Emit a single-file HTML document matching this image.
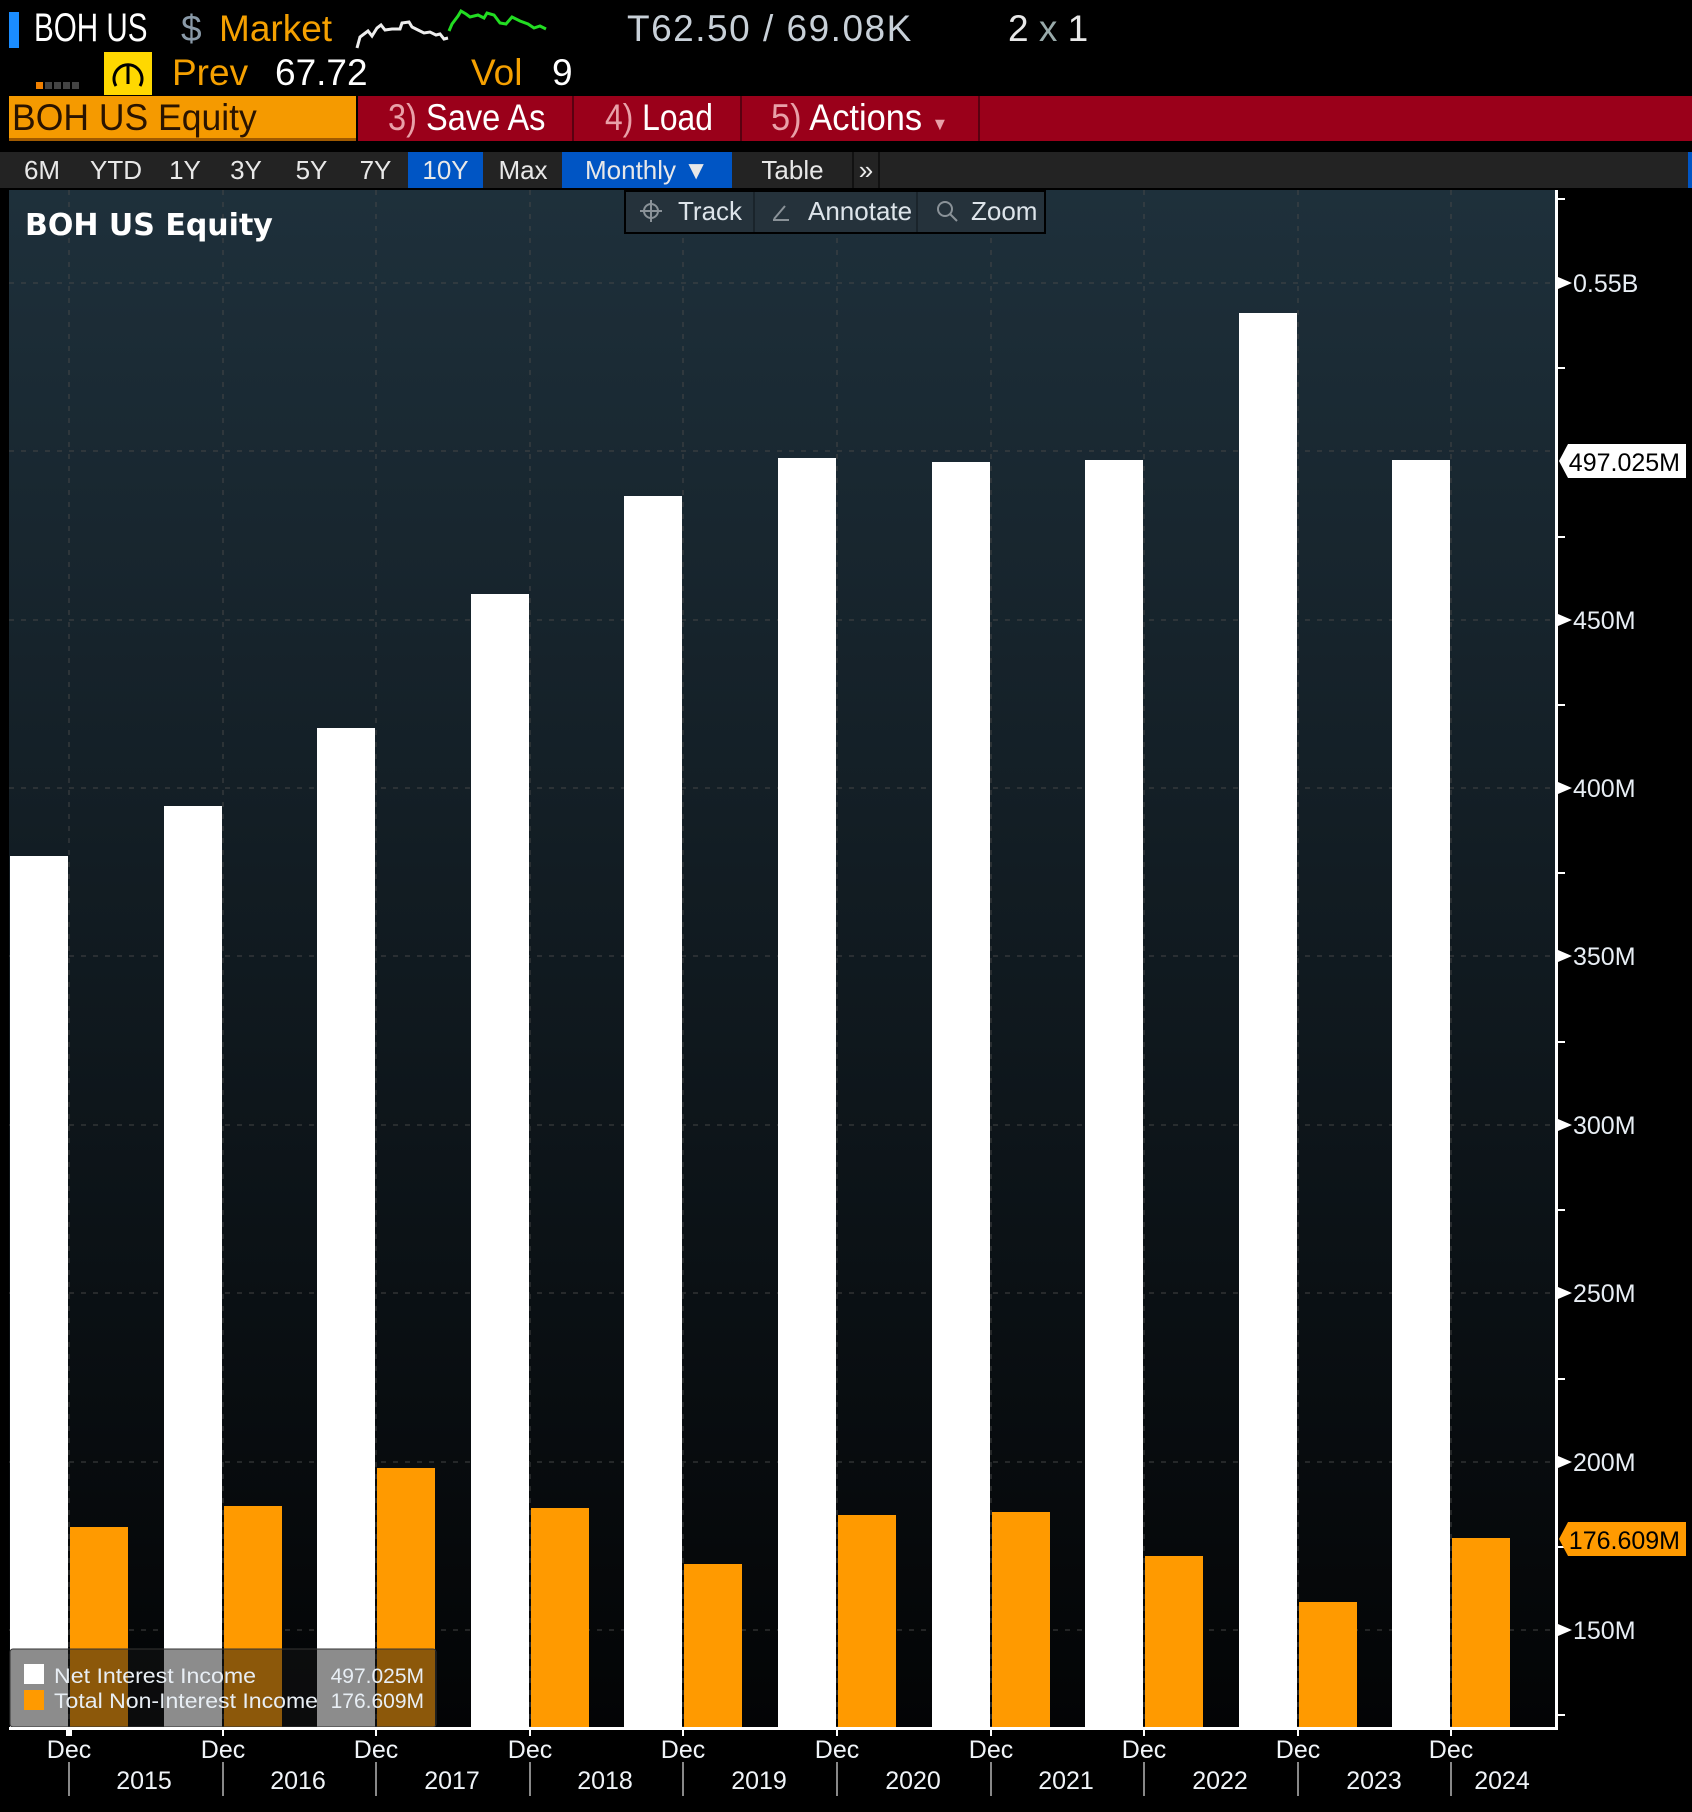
<!DOCTYPE html>
<html><head><meta charset="utf-8"><style>
*{margin:0;padding:0;box-sizing:border-box}
body{width:1692px;height:1812px;background:#000;position:relative;overflow:hidden;font-family:"Liberation Sans Narrow","Liberation Sans",sans-serif;color:#fff}
.a{position:absolute;white-space:nowrap}
.s{transform-origin:left center}
.tab{position:absolute;top:152px;height:36px;background:#232323;color:#e8e8e8;font-size:26px;line-height:36px;text-align:center}
.blue{background:#0055c4}
</style></head><body>
<div class="a" style="left:9px;top:12px;width:10px;height:36px;background:#1a8cff"></div>
<div class="a s" style="left:34px;top:6px;font-size:40px;color:#fff;transform:scaleX(.74)">BOH US</div>
<div class="a" style="left:181px;top:8px;font-size:37px;color:#8a9aa8">$</div>
<div class="a" style="left:219px;top:8px;font-size:37px;color:#f5a000">Market</div>
<svg class="a" style="left:0;top:0" width="600" height="60">
<polyline fill="none" stroke="#eee" stroke-width="3" points="357,48 360,37 364,34 368,31 372,36 377,28 381,25 385,30 392,29 400,29 402,23 409,22 412,27 418,30 424,33 430,32 436,35 440,34 444,39 448,38"/>
<polyline fill="none" stroke="#22dd22" stroke-width="3" points="449,31 452,24 458,16 461,11 466,14 470,17 478,15 484,18 487,13 494,15 500,23 506,24 512,17 520,21 528,24 534,28 540,26 546,29"/>
</svg>
<div class="a" style="left:627px;top:8px;font-size:37px;color:#c8d0d8;letter-spacing:1.5px">T62.50 / 69.08K</div>
<div class="a" style="left:1008px;top:8px;font-size:37px;color:#e8e8e8">2 <span style="color:#9aa">x</span> 1</div>
<div class="a" style="left:36px;top:82px;width:7px;height:7px;background:#f08000"></div>
<div class="a" style="left:45px;top:82px;width:7px;height:7px;background:#444"></div>
<div class="a" style="left:54px;top:82px;width:7px;height:7px;background:#444"></div>
<div class="a" style="left:63px;top:82px;width:7px;height:7px;background:#444"></div>
<div class="a" style="left:72px;top:82px;width:7px;height:7px;background:#444"></div>
<div class="a" style="left:104px;top:52px;width:48px;height:43px;background:#ffd800"></div>
<svg class="a" style="left:104px;top:52px" width="48" height="43"><path d="M12 34 A14 14 0 1 1 36 34" fill="none" stroke="#000" stroke-width="3"/><path d="M24 14 L24 32" stroke="#000" stroke-width="3"/></svg>
<div class="a" style="left:172px;top:52px;font-size:37px;color:#f5a000">Prev</div>
<div class="a" style="left:275px;top:52px;font-size:37px;color:#fff">67.72</div>
<div class="a" style="left:471px;top:52px;font-size:37px;color:#f5a000">Vol</div>
<div class="a" style="left:552px;top:52px;font-size:37px;color:#fff">9</div>
<div class="a" style="left:9px;top:96px;width:347px;height:45px;background:#f59a00;border-bottom:3px solid #a05a00"></div>
<div class="a s" style="left:12px;top:96px;font-size:37px;line-height:44px;color:#2a1400;transform:scaleX(.96)">BOH US Equity</div>
<div class="a" style="left:358px;top:96px;width:1334px;height:45px;background:#9a001a"></div>
<div class="a" style="left:572px;top:96px;width:2px;height:45px;background:#5a0010"></div>
<div class="a" style="left:740px;top:96px;width:2px;height:45px;background:#5a0010"></div>
<div class="a" style="left:978px;top:96px;width:2px;height:45px;background:#5a0010"></div>
<div class="a s" style="left:388px;top:96px;font-size:37px;line-height:44px;transform:scaleX(.88)"><span style="color:#e8a0a8">3)</span> Save As</div>
<div class="a s" style="left:605px;top:96px;font-size:37px;line-height:44px;transform:scaleX(.86)"><span style="color:#e8a0a8">4)</span> Load</div>
<div class="a s" style="left:771px;top:96px;font-size:37px;line-height:44px;transform:scaleX(.93)"><span style="color:#e8a0a8">5)</span> Actions <span style="font-size:18px;color:#e8a0a8">▼</span></div>
<div class="a" style="left:0;top:152px;width:1692px;height:36px;background:#232323"></div>
<div class="tab" style="left:9px;width:66px">6M</div>
<div class="tab" style="left:77px;width:78px">YTD</div>
<div class="tab" style="left:158px;width:54px">1Y</div>
<div class="tab" style="left:214px;width:64px">3Y</div>
<div class="tab" style="left:280px;width:63px">5Y</div>
<div class="tab" style="left:345px;width:61px">7Y</div>
<div class="tab blue" style="left:408px;width:75px">10Y</div>
<div class="tab" style="left:486px;width:74px">Max</div>
<div class="tab blue" style="left:562px;width:170px">Monthly ▼</div>
<div class="tab" style="left:735px;width:115px">Table</div>
<div class="tab" style="left:852px;width:28px;border-left:2px solid #111;border-right:2px solid #111">»</div>
<div class="a" style="left:1688px;top:152px;width:4px;height:36px;background:#0055c4"></div>
<svg class="a" style="left:0;top:0" width="1692" height="1812" font-family="Liberation Sans Narrow, Liberation Sans, sans-serif">
<defs><linearGradient id="g" x1="0" y1="0" x2="0" y2="1"><stop offset="0" stop-color="#1e303b"/><stop offset="1" stop-color="#030405"/></linearGradient></defs>
<rect x="9" y="190" width="1546" height="1538" fill="url(#g)"/>
<g stroke="#4a4a4a" stroke-width="2" stroke-dasharray="5,7" opacity="0.45">
<line x1="9" x2="1555" y1="283" y2="283"/><line x1="9" x2="1555" y1="451" y2="451"/><line x1="9" x2="1555" y1="620" y2="620"/><line x1="9" x2="1555" y1="788" y2="788"/><line x1="9" x2="1555" y1="956" y2="956"/><line x1="9" x2="1555" y1="1125" y2="1125"/><line x1="9" x2="1555" y1="1293" y2="1293"/><line x1="9" x2="1555" y1="1462" y2="1462"/><line x1="9" x2="1555" y1="1630" y2="1630"/>
<line x1="69" x2="69" y1="190" y2="1728"/><line x1="223" x2="223" y1="190" y2="1728"/><line x1="376" x2="376" y1="190" y2="1728"/><line x1="530" x2="530" y1="190" y2="1728"/><line x1="683" x2="683" y1="190" y2="1728"/><line x1="837" x2="837" y1="190" y2="1728"/><line x1="991" x2="991" y1="190" y2="1728"/><line x1="1144" x2="1144" y1="190" y2="1728"/><line x1="1298" x2="1298" y1="190" y2="1728"/><line x1="1451" x2="1451" y1="190" y2="1728"/>
</g>
<g fill="#fff">
<rect x="10" y="856" width="58" height="872"/><rect x="164" y="806" width="58" height="922"/><rect x="317" y="728" width="58" height="1000"/><rect x="471" y="594" width="58" height="1134"/><rect x="624" y="496" width="58" height="1232"/><rect x="778" y="458" width="58" height="1270"/><rect x="932" y="462" width="58" height="1266"/><rect x="1085" y="460" width="58" height="1268"/><rect x="1239" y="313" width="58" height="1415"/><rect x="1392" y="460" width="58" height="1268"/>
</g>
<g fill="#ff9a00">
<rect x="70" y="1527" width="58" height="201"/><rect x="224" y="1506" width="58" height="222"/><rect x="377" y="1468" width="58" height="260"/><rect x="531" y="1508" width="58" height="220"/><rect x="684" y="1564" width="58" height="164"/><rect x="838" y="1515" width="58" height="213"/><rect x="992" y="1512" width="58" height="216"/><rect x="1145" y="1556" width="58" height="172"/><rect x="1299" y="1602" width="58" height="126"/><rect x="1452" y="1538" width="58" height="190"/>
</g>
<rect x="10" y="1649" width="426" height="78" rx="3" fill="rgba(20,20,20,0.49)" stroke="#333" stroke-width="1"/>
<rect x="24" y="1664" width="20" height="20" fill="#fff"/><rect x="24" y="1690" width="20" height="20" fill="#ff9a00"/>
<g font-size="21" fill="#e8eef4"><text x="54" y="1683" textLength="202" lengthAdjust="spacingAndGlyphs">Net Interest Income</text><text x="54" y="1708" textLength="264" lengthAdjust="spacingAndGlyphs">Total Non-Interest Income</text>
<text x="424" y="1683" text-anchor="end">497.025M</text><text x="424" y="1708" text-anchor="end">176.609M</text></g>
<rect x="1555" y="190" width="3" height="1540" fill="#fff"/>
<rect x="9" y="1727" width="1549" height="3" fill="#fff"/>
<g fill="#fff"><rect x="1558" y="198" width="7" height="2"/><rect x="1558" y="367" width="7" height="2"/><rect x="1558" y="536" width="7" height="2"/><rect x="1558" y="704" width="7" height="2"/><rect x="1558" y="872" width="7" height="2"/><rect x="1558" y="1041" width="7" height="2"/><rect x="1558" y="1209" width="7" height="2"/><rect x="1558" y="1378" width="7" height="2"/><rect x="1558" y="1546" width="7" height="2"/><rect x="1558" y="1714" width="7" height="2"/>
<path d="M1558 277 L1572 283 L1558 289Z"/><path d="M1558 614 L1572 620 L1558 626Z"/><path d="M1558 782 L1572 788 L1558 794Z"/><path d="M1558 950 L1572 956 L1558 962Z"/><path d="M1558 1119 L1572 1125 L1558 1131Z"/><path d="M1558 1287 L1572 1293 L1558 1299Z"/><path d="M1558 1456 L1572 1462 L1558 1468Z"/><path d="M1558 1624 L1572 1630 L1558 1636Z"/>
</g>
<g font-size="25" fill="#e8eef4"><text x="1573" y="292">0.55B</text><text x="1573" y="629">450M</text><text x="1573" y="797">400M</text><text x="1573" y="965">350M</text><text x="1573" y="1134">300M</text><text x="1573" y="1302">250M</text><text x="1573" y="1471">200M</text><text x="1573" y="1639">150M</text></g>
<path d="M1568 444 L1686 444 L1686 478 L1568 478 L1559 461Z" fill="#fff"/>
<text x="1680" y="471" font-size="25" fill="#000" text-anchor="end">497.025M</text>
<path d="M1568 1522 L1686 1522 L1686 1556 L1568 1556 L1559 1539Z" fill="#ff9a00"/>
<text x="1680" y="1549" font-size="25" fill="#000" text-anchor="end">176.609M</text>
<rect x="66" y="1730" width="6" height="6" fill="#fff"/>
<g fill="#fff"><rect x="222" y="1730" width="2" height="6"/><rect x="375" y="1730" width="2" height="6"/><rect x="529" y="1730" width="2" height="6"/><rect x="682" y="1730" width="2" height="6"/><rect x="836" y="1730" width="2" height="6"/><rect x="990" y="1730" width="2" height="6"/><rect x="1143" y="1730" width="2" height="6"/><rect x="1297" y="1730" width="2" height="6"/><rect x="1450" y="1730" width="2" height="6"/></g>
<g font-size="25" fill="#f0f4f8" text-anchor="middle">
<text x="69" y="1758">Dec</text><text x="223" y="1758">Dec</text><text x="376" y="1758">Dec</text><text x="530" y="1758">Dec</text><text x="683" y="1758">Dec</text><text x="837" y="1758">Dec</text><text x="991" y="1758">Dec</text><text x="1144" y="1758">Dec</text><text x="1298" y="1758">Dec</text><text x="1451" y="1758">Dec</text>
<text x="144" y="1789">2015</text><text x="298" y="1789">2016</text><text x="452" y="1789">2017</text><text x="605" y="1789">2018</text><text x="759" y="1789">2019</text><text x="913" y="1789">2020</text><text x="1066" y="1789">2021</text><text x="1220" y="1789">2022</text><text x="1374" y="1789">2023</text><text x="1502" y="1789">2024</text>
</g>
<g fill="#888"><rect x="68" y="1762" width="2" height="34"/><rect x="222" y="1762" width="2" height="34"/><rect x="375" y="1762" width="2" height="34"/><rect x="529" y="1762" width="2" height="34"/><rect x="682" y="1762" width="2" height="34"/><rect x="836" y="1762" width="2" height="34"/><rect x="990" y="1762" width="2" height="34"/><rect x="1143" y="1762" width="2" height="34"/><rect x="1297" y="1762" width="2" height="34"/><rect x="1450" y="1762" width="2" height="34"/></g>
<rect x="625" y="191" width="420" height="42" fill="#25323b" stroke="#000" stroke-width="2"/>
<line x1="754" y1="192" x2="754" y2="232" stroke="#1a242b" stroke-width="2"/><line x1="917" y1="192" x2="917" y2="232" stroke="#1a242b" stroke-width="2"/>
<g stroke="#8a9298" stroke-width="2" fill="none"><circle cx="651" cy="211" r="7"/><line x1="651" y1="200" x2="651" y2="222"/><line x1="640" y1="211" x2="662" y2="211"/>
<line x1="774" y1="219" x2="785" y2="206"/><line x1="773" y1="220" x2="789" y2="220"/>
<circle cx="945" cy="209" r="7"/><line x1="950" y1="214" x2="957" y2="221"/></g>
<g font-size="26" fill="#dde4ea"><text x="678" y="220">Track</text><text x="808" y="220">Annotate</text><text x="971" y="220">Zoom</text></g>
<text x="25" y="235" font-family="DejaVu Sans, sans-serif" font-weight="bold" font-size="30" fill="#fff">BOH US Equity</text>
</svg>
</body></html>
